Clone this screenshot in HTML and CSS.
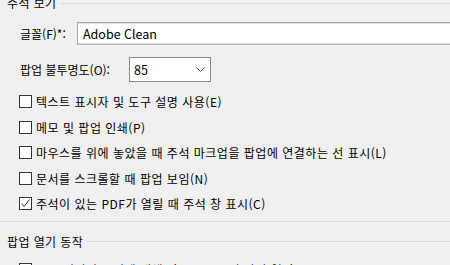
FILE: index.html
```html
<!DOCTYPE html>
<html lang="ko">
<head>
    <meta charset="UTF-8">
    <title>주석 환경 설정</title>
    <link rel="stylesheet" href="styles.css">
</head>
<body>
    <div class="group">
        <div class="legend"><span class="legend-text">주석 보기</span><span class="legend-line"></span></div>

        <div class="field field-font">
            <label class="field-label">글꼴(F)*:</label>
            <div class="textbox">Adobe Clean</div>
        </div>

        <div class="field field-opacity">
            <label class="field-label">팝업 불투명도(O):</label>
            <div class="select">
                <span>85</span>
                <svg class="chevron" width="9" height="5" viewBox="0 0 9 5"><polyline points="0.5,0.5 4.5,4.5 8.5,0.5" fill="none" stroke="#444" stroke-width="1"/></svg>
            </div>
        </div>

        <div class="checks">
            <div class="check"><span class="box"></span>텍스트 표시자 및 도구 설명 사용(E)</div>
            <div class="check"><span class="box"></span>메모 및 팝업 인쇄(P)</div>
            <div class="check"><span class="box"></span>마우스를 위에 놓았을 때 주석 마크업을 팝업에 연결하는 선 표시(L)</div>
            <div class="check"><span class="box"></span>문서를 스크롤할 때 팝업 보임(N)</div>
            <div class="check"><span class="box checked"><svg width="11" height="11" viewBox="0 0 11 11"><polyline points="1.5,5.5 4,8.5 9.5,1.5" fill="none" stroke="#333" stroke-width="1"/></svg></span>주석이 있는 PDF가 열릴 때 주석 창 표시(C)</div>
        </div>
    </div>

    <div class="group group-second">
        <div class="legend"><span class="legend-text">팝업 열기 동작</span><span class="legend-line"></span></div>
        <div class="checks">
            <div class="check"><span class="box"></span>노트 이외의 주석에 대해 자동으로 주석 팝업 열기</div>
        </div>
    </div>
</body>
</html>
```

FILE: styles.css
```css
body {
    margin: 0;
    width: 450px;
    height: 265px;
    overflow: hidden;
    background: #f0f0f0;
    color: #000;
    font-family: "Noto Sans CJK KR", "Noto Sans", sans-serif;
    font-size: 12px;
}
.group {
    border-bottom: 1px solid #dcdcdc;
    padding-bottom: 4px;
}
.group-second {
    border-bottom: none;
    margin-top: 12px;
}
/* group title with line */
.legend {
    display: flex;
    align-items: center;
    height: 16px;
    margin-top: -5px;
    padding-left: 7px;
    letter-spacing: 0.4px;
}
.group-second .legend {
    margin-top: 0;
}
.legend-text {
    white-space: nowrap;
    line-height: 16px;
    padding-right: 3px;
}
.legend-line {
    flex: 1;
    height: 1px;
    background: #dcdcdc;
}
.field {
    display: flex;
    align-items: center;
    padding-left: 20px;
}
.field-font {
    margin-top: 11px;
}
.field-opacity {
    margin-top: 12px;
}
.field-label {
    white-space: nowrap;
    flex-shrink: 0;
}
.field-font .field-label {
    width: 57px;
}
.field-opacity .field-label {
    width: 109px;
}
.textbox {
    flex: 1;
    height: 21px;
    line-height: 21px;
    padding-left: 5px;
    background: #fff;
    border: 1px solid #a8a8a8;
    border-right: none;
    border-bottom-color: #b4b4b4;
    box-shadow: inset 0 1px 0 #e3e3e3, inset 0 -1px 0 #dadada;
    font-size: 12.5px;
}
.select {
    height: 23px;
    width: 71px;
    display: flex;
    align-items: center;
    justify-content: space-between;
    padding: 0 5px 0 4px;
    background: #fff;
    border: 1px solid #8c8c8c;
    font-size: 12.5px;
}
.chevron {
    display: block;
}
.checks {
    margin-top: 7px;
}
.check {
    display: flex;
    align-items: center;
    height: 25.5px;
    padding-left: 19px;
    white-space: nowrap;
    letter-spacing: 0.5px;
}
.box {
    width: 11px;
    height: 11px;
    border: 1px solid #333;
    background: #fff;
    margin-right: 4px;
    flex-shrink: 0;
    display: flex;
}
```
